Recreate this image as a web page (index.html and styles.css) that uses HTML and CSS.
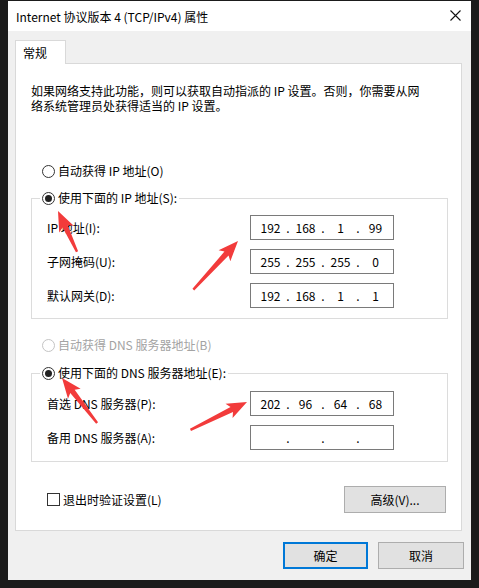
FILE: index.html
```html
<!DOCTYPE html>
<html lang="zh-CN">
<head>
    <meta charset="UTF-8">
    <meta name="viewport" content="width=device-width, initial-scale=1.0">
    <title>Internet 协议版本 4 (TCP/IPv4) 属性</title>
    <link rel="stylesheet" href="styles.css">
</head>
<body>
    <div class="window">
        <div class="titlebar">
            <span class="title">Internet 协议版本 4 (TCP/IPv4) 属性</span>
            <svg class="close" width="11" height="11" viewBox="0 0 11 11">
                <path d="M0.5 0.5 L10.5 10.5 M10.5 0.5 L0.5 10.5" stroke="#111" stroke-width="1.1" fill="none"/>
            </svg>
        </div>

        <div class="tabs">
            <div class="tab">常规</div>
        </div>

        <div class="panel">
            <p class="intro">如果网络支持此功能，则可以获取自动指派的 IP 设置。否则，你需要从网<br>络系统管理员处获得适当的 IP 设置。</p>

            <label class="radio auto-ip"><span class="dot"></span>自动获得 IP 地址(O)</label>

            <fieldset class="group ip-group">
                <legend><label class="radio"><span class="dot on"></span>使用下面的 IP 地址(S):</label></legend>
                <div class="row">
                    <span class="lbl">IP 地址(I):</span>
                    <div class="ipbox"><span class="seg">192</span><span class="sep">.</span><span class="seg">168</span><span class="sep">.</span><span class="seg">1</span><span class="sep">.</span><span class="seg">99</span></div>
                </div>
                <div class="row">
                    <span class="lbl">子网掩码(U):</span>
                    <div class="ipbox"><span class="seg">255</span><span class="sep">.</span><span class="seg">255</span><span class="sep">.</span><span class="seg">255</span><span class="sep">.</span><span class="seg">0</span></div>
                </div>
                <div class="row">
                    <span class="lbl">默认网关(D):</span>
                    <div class="ipbox"><span class="seg">192</span><span class="sep">.</span><span class="seg">168</span><span class="sep">.</span><span class="seg">1</span><span class="sep">.</span><span class="seg">1</span></div>
                </div>
            </fieldset>

            <label class="radio disabled auto-dns"><span class="dot"></span>自动获得 DNS 服务器地址(B)</label>

            <fieldset class="group dns-group">
                <legend><label class="radio"><span class="dot on"></span>使用下面的 DNS 服务器地址(E):</label></legend>
                <div class="row">
                    <span class="lbl">首选 DNS 服务器(P):</span>
                    <div class="ipbox"><span class="seg">202</span><span class="sep">.</span><span class="seg">96</span><span class="sep">.</span><span class="seg">64</span><span class="sep">.</span><span class="seg">68</span></div>
                </div>
                <div class="row">
                    <span class="lbl">备用 DNS 服务器(A):</span>
                    <div class="ipbox"><span class="seg"></span><span class="sep">.</span><span class="seg"></span><span class="sep">.</span><span class="seg"></span><span class="sep">.</span><span class="seg"></span></div>
                </div>
            </fieldset>

            <div class="options">
                <label class="check"><span class="box"></span>退出时验证设置(L)</label>
                <button class="btn advanced">高级(V)...</button>
            </div>
        </div>

        <div class="actions">
            <button class="btn default">确定</button>
            <button class="btn">取消</button>
        </div>
    </div>

    <!-- 红色标注箭头 -->
    <svg class="marks" width="479" height="588" viewBox="0 0 479 588">
        <g fill="#f23b3b">
            <polygon transform="translate(58 211) rotate(65)" points="0,0 20,-8 17,-2.8 45,-1.2 45,1.2 17,2.8 20,8"/>
            <polygon transform="translate(238 241) rotate(132.6)" points="0,0 20,-8 17,-2.8 66,-1.2 66,1.2 17,2.8 20,8"/>
            <polygon transform="translate(62 378) rotate(52)" points="0,0 20,-8 17,-2.8 57,-1.2 57,1.2 17,2.8 20,8"/>
            <polygon transform="translate(247 402) rotate(153.8)" points="0,0 20,-8 17,-2.8 63,-1.2 63,1.2 17,2.8 20,8"/>
        </g>
    </svg>
</body>
</html>
```

FILE: styles.css
```css
body {
    margin: 0;
    background: #1b1b1b;
    font-family: "Noto Sans CJK SC", "Noto Sans", sans-serif;
    font-size: 12px;
    color: #000;
}
.window {
    position: relative;
    width: 463px;
    height: 579px;
    margin: 1px 0 0 8px;
    background: #f0f0f0;
    box-sizing: border-box;
}
.titlebar {
    display: flex;
    align-items: center;
    height: 30px;
    padding-left: 8px;
    background: #fff;
}
.close {
    margin-left: auto;
    margin-right: 10px;
    margin-top: -2px;
}
.tabs {
    display: flex;
    padding: 9px 0 0 7px;
}
.tab {
    position: relative;
    z-index: 1;
    width: 51px;
    height: 24px;
    margin-bottom: -1px;
    padding: 4px 0 0 7px;
    line-height: 16px;
    box-sizing: border-box;
    background: #fff;
    border: 1px solid #d9d9d9;
    border-bottom: none;
}
.panel {
    width: 447px;
    margin-left: 7px;
    padding: 19px 13px 17px 15px;
    box-sizing: border-box;
    background: #fff;
    border: 1px solid #d9d9d9;
}
.intro {
    margin: 0;
    line-height: 15px;
}
.radio {
    display: flex;
    align-items: center;
    height: 16px;
    line-height: 16px;
    white-space: nowrap;
}
.radio .dot {
    display: flex;
    align-items: center;
    justify-content: center;
    width: 13px;
    height: 13px;
    margin-right: 3px;
    box-sizing: border-box;
    border: 1px solid #333;
    border-radius: 50%;
    background: #fff;
}
.radio .dot.on::after {
    content: "";
    width: 7px;
    height: 7px;
    border-radius: 50%;
    background: #222;
}
.radio.disabled {
    color: #a3a3a3;
}
.radio.disabled .dot {
    border-color: #c4c4c4;
}
.auto-ip {
    margin: 50px 0 0 11px;
}
.auto-dns {
    margin: 18px 0 0 11px;
}
.group {
    min-width: 0;
    margin: 11px 0 0 0;
    padding: 0 0 10px 8px;
    border: 1px solid #dcdcdc;
}
.group legend {
    padding: 0 2px;
}
.dns-group {
    margin-top: 12px;
    padding-bottom: 11px;
}
.row {
    display: flex;
    align-items: center;
    height: 25px;
    margin: 9px 0 0 7px;
}
.dns-group .row:first-of-type {
    margin-top: 10px;
}
.lbl {
    width: 203px;
}
.ipbox {
    display: flex;
    align-items: center;
    width: 144px;
    height: 25px;
    padding-left: 5px;
    box-sizing: border-box;
    border: 1px solid #7a7a7a;
}
.seg {
    width: 29px;
    text-align: center;
}
.sep {
    width: 6px;
    text-align: center;
}
.options {
    display: flex;
    align-items: center;
    justify-content: space-between;
    margin-top: 24px;
}
.check {
    display: flex;
    align-items: center;
    margin-left: 16px;
}
.check .box {
    width: 13px;
    height: 13px;
    margin-right: 3px;
    box-sizing: border-box;
    border: 1px solid #333;
    background: #fff;
}
.btn {
    height: 27px;
    padding: 0;
    font-family: inherit;
    font-size: 12px;
    color: #000;
    background: #e1e1e1;
    border: 1px solid #adadad;
    box-sizing: border-box;
}
.advanced {
    width: 102px;
    margin-right: 2px;
}
.actions {
    display: flex;
    justify-content: flex-end;
    gap: 10px;
    padding: 11px 7px 0 0;
}
.actions .btn {
    width: 86px;
}
.actions .default {
    width: 85px;
    border: 2px solid #0078d7;
}
.marks {
    position: absolute;
    top: 0;
    left: 0;
    pointer-events: none;
}
```
